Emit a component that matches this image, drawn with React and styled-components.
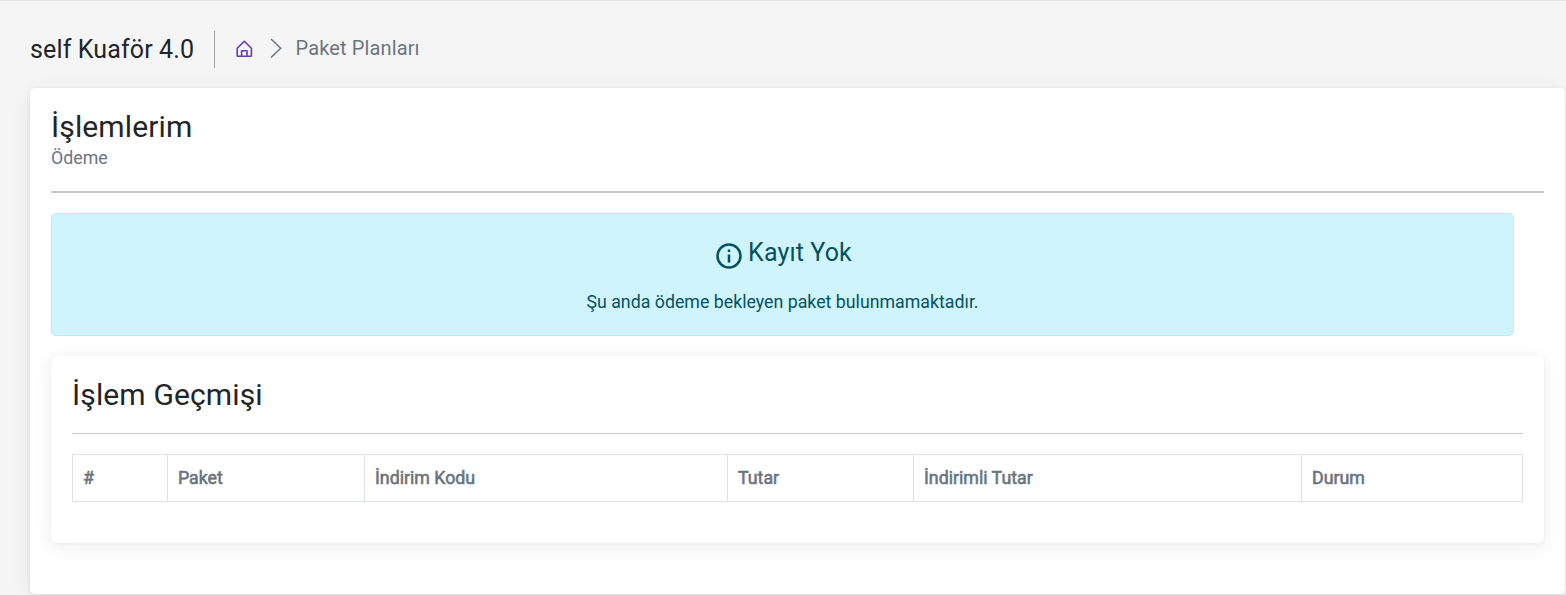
import React from "react";
import styled, { createGlobalStyle } from "styled-components";

const GlobalStyle = createGlobalStyle`
  *, *::before, *::after { box-sizing: border-box; }
  body {
    margin: 0;
    background: #f5f5f5;
    color: #212529;
    font-family: Roboto, "Liberation Sans", sans-serif;
    font-size: 17.78px;
    overflow: hidden;
  }
`;

const Page = styled.main`
  height: 595px;
  padding: 29px 1px 0 30px;
  border-top: 1px solid #e3e3e3;
`;

const Header = styled.header`
  display: flex;
  align-items: center;
  height: 38px;
  margin-bottom: 20px;
`;

const Brand = styled.h1`
  margin: 0;
  padding: 2px 20px 0 0;
  font-size: 25px;
  font-weight: 400;
  line-height: 36px;
  letter-spacing: 0.13px;
`;

const Breadcrumb = styled.nav`
  display: flex;
  align-items: center;
  height: 37px;
  margin-top: 1px;
  padding: 0 0 2px 21.2px;
  border-left: 1px solid #a7a2a4;
  color: #6c757d;
  font-size: 20px;
  line-height: 24px;
  letter-spacing: 0.13px;
`;

const HomeIcon = styled.svg`
  width: 17px;
  height: 18px;
  color: #6639b7;
`;

const Chevron = styled.svg`
  width: 12px;
  height: 21px;
  margin: 0 14px 0 16.2px;
`;

const Crumb = styled.span`
  padding-bottom: 2px;
`;

const Card = styled.section`
  height: ${(p) => p.$height}px;
  padding: 0 21px;
  background: #fff;
  border-radius: 5px;
  box-shadow: 0 4px 20px 1px rgba(0, 0, 0, 0.06), 0 1px 4px rgba(0, 0, 0, ${(p) => p.$edge});
`;

const Title = styled.h2`
  margin: 0;
  padding-top: ${(p) => p.$top}px;
  font-size: 30px;
  font-weight: 400;
  line-height: 36px;
  letter-spacing: 0.13px;
`;

const Subtitle = styled.p`
  margin: 0;
  color: #6c757d;
  line-height: 26px;
`;

const Divider = styled.hr`
  height: ${(p) => p.$weight}px;
  margin: ${(p) => p.$top}px 0 20px;
  border: 0;
  background: #c8c8c8;
`;

const Alert = styled.div`
  display: flex;
  flex-direction: column;
  align-items: center;
  height: 123px;
  margin: 0 30px 20px 0;
  padding-top: 23px;
  border: 1px solid #b6effb;
  border-radius: 5px;
  background: #cff4fc;
  color: #055160;
`;

const AlertTitle = styled.h3`
  display: flex;
  align-items: center;
  margin: 0;
  padding-left: 2.5px;
  font-size: 25px;
  font-weight: 400;
  line-height: 32px;
  letter-spacing: 0.13px;
`;

const InfoIcon = styled.svg`
  width: 26px;
  height: 26px;
  margin: 6px 6.5px 0 0;
`;

const AlertText = styled.p`
  margin: 20px 0 0;
  line-height: 26px;
`;

const Table = styled.table`
  width: calc(100% - 0.6px);
  table-layout: fixed;
  border-collapse: collapse;
`;

const HeadCell = styled.th`
  width: ${(p) => p.$width}px;
  height: 47px;
  padding: 0 10px 1px;
  border: 1px solid #dee2e6;
  color: #6c757d;
  font-size: 17.78px;
  font-weight: 400;
  text-align: left;
  -webkit-text-stroke: 0.6px currentColor;
`;

const columns = [
  ["#", 95],
  ["Paket", 197],
  ["İndirim Kodu", 363],
  ["Tutar", 186],
  ["İndirimli Tutar", 388],
  ["Durum", 221],
];

export default function App() {
  return (
    <>
      <GlobalStyle />
      <Page>
        <Header>
          <Brand>self Kuaför 4.0</Brand>
          <Breadcrumb>
            <HomeIcon viewBox="0 0 17 18" fill="none" stroke="currentColor" strokeWidth="1.6" strokeLinejoin="round">
              <path d="M1.2 8.3 8.3 1.3 15.4 8.3v7.2q0 .8-.8.8H2q-.8 0-.8-.8Z" />
              <path d="M5.6 16v-5.3h5.4V16" />
            </HomeIcon>
            <Chevron viewBox="0 0 12 21" fill="none" stroke="currentColor" strokeWidth="1.5">
              <path d="m1 1 9.7 9.2L1 19.5" />
            </Chevron>
            <Crumb>Paket Planları</Crumb>
          </Breadcrumb>
        </Header>
        <Card as="div" $height={506} $edge={0.08}>
          <Title $top={21}>İşlemlerim</Title>
          <Subtitle>Ödeme</Subtitle>
          <Divider $weight={2} $top={20} />
          <Alert>
            <AlertTitle>
              <InfoIcon viewBox="0 0 26 26" fill="none" stroke="currentColor" strokeWidth="2.5">
                <circle cx="13" cy="13" r="11.5" />
                <path d="M13 11.5v8M13 6.5v2.6" />
              </InfoIcon>
              Kayıt Yok
            </AlertTitle>
            <AlertText>Şu anda ödeme bekleyen paket bulunmamaktadır.</AlertText>
          </Alert>
          <Card $height={187} $edge={0.05}>
            <Title $top={21}>İşlem Geçmişi</Title>
            <Divider $weight={1} $top={20} />
            <Table>
              <thead>
                <tr>
                  {columns.map(([label, width]) => (
                    <HeadCell key={label} $width={width}>{label}</HeadCell>
                  ))}
                </tr>
              </thead>
            </Table>
          </Card>
        </Card>
      </Page>
    </>
  );
}
